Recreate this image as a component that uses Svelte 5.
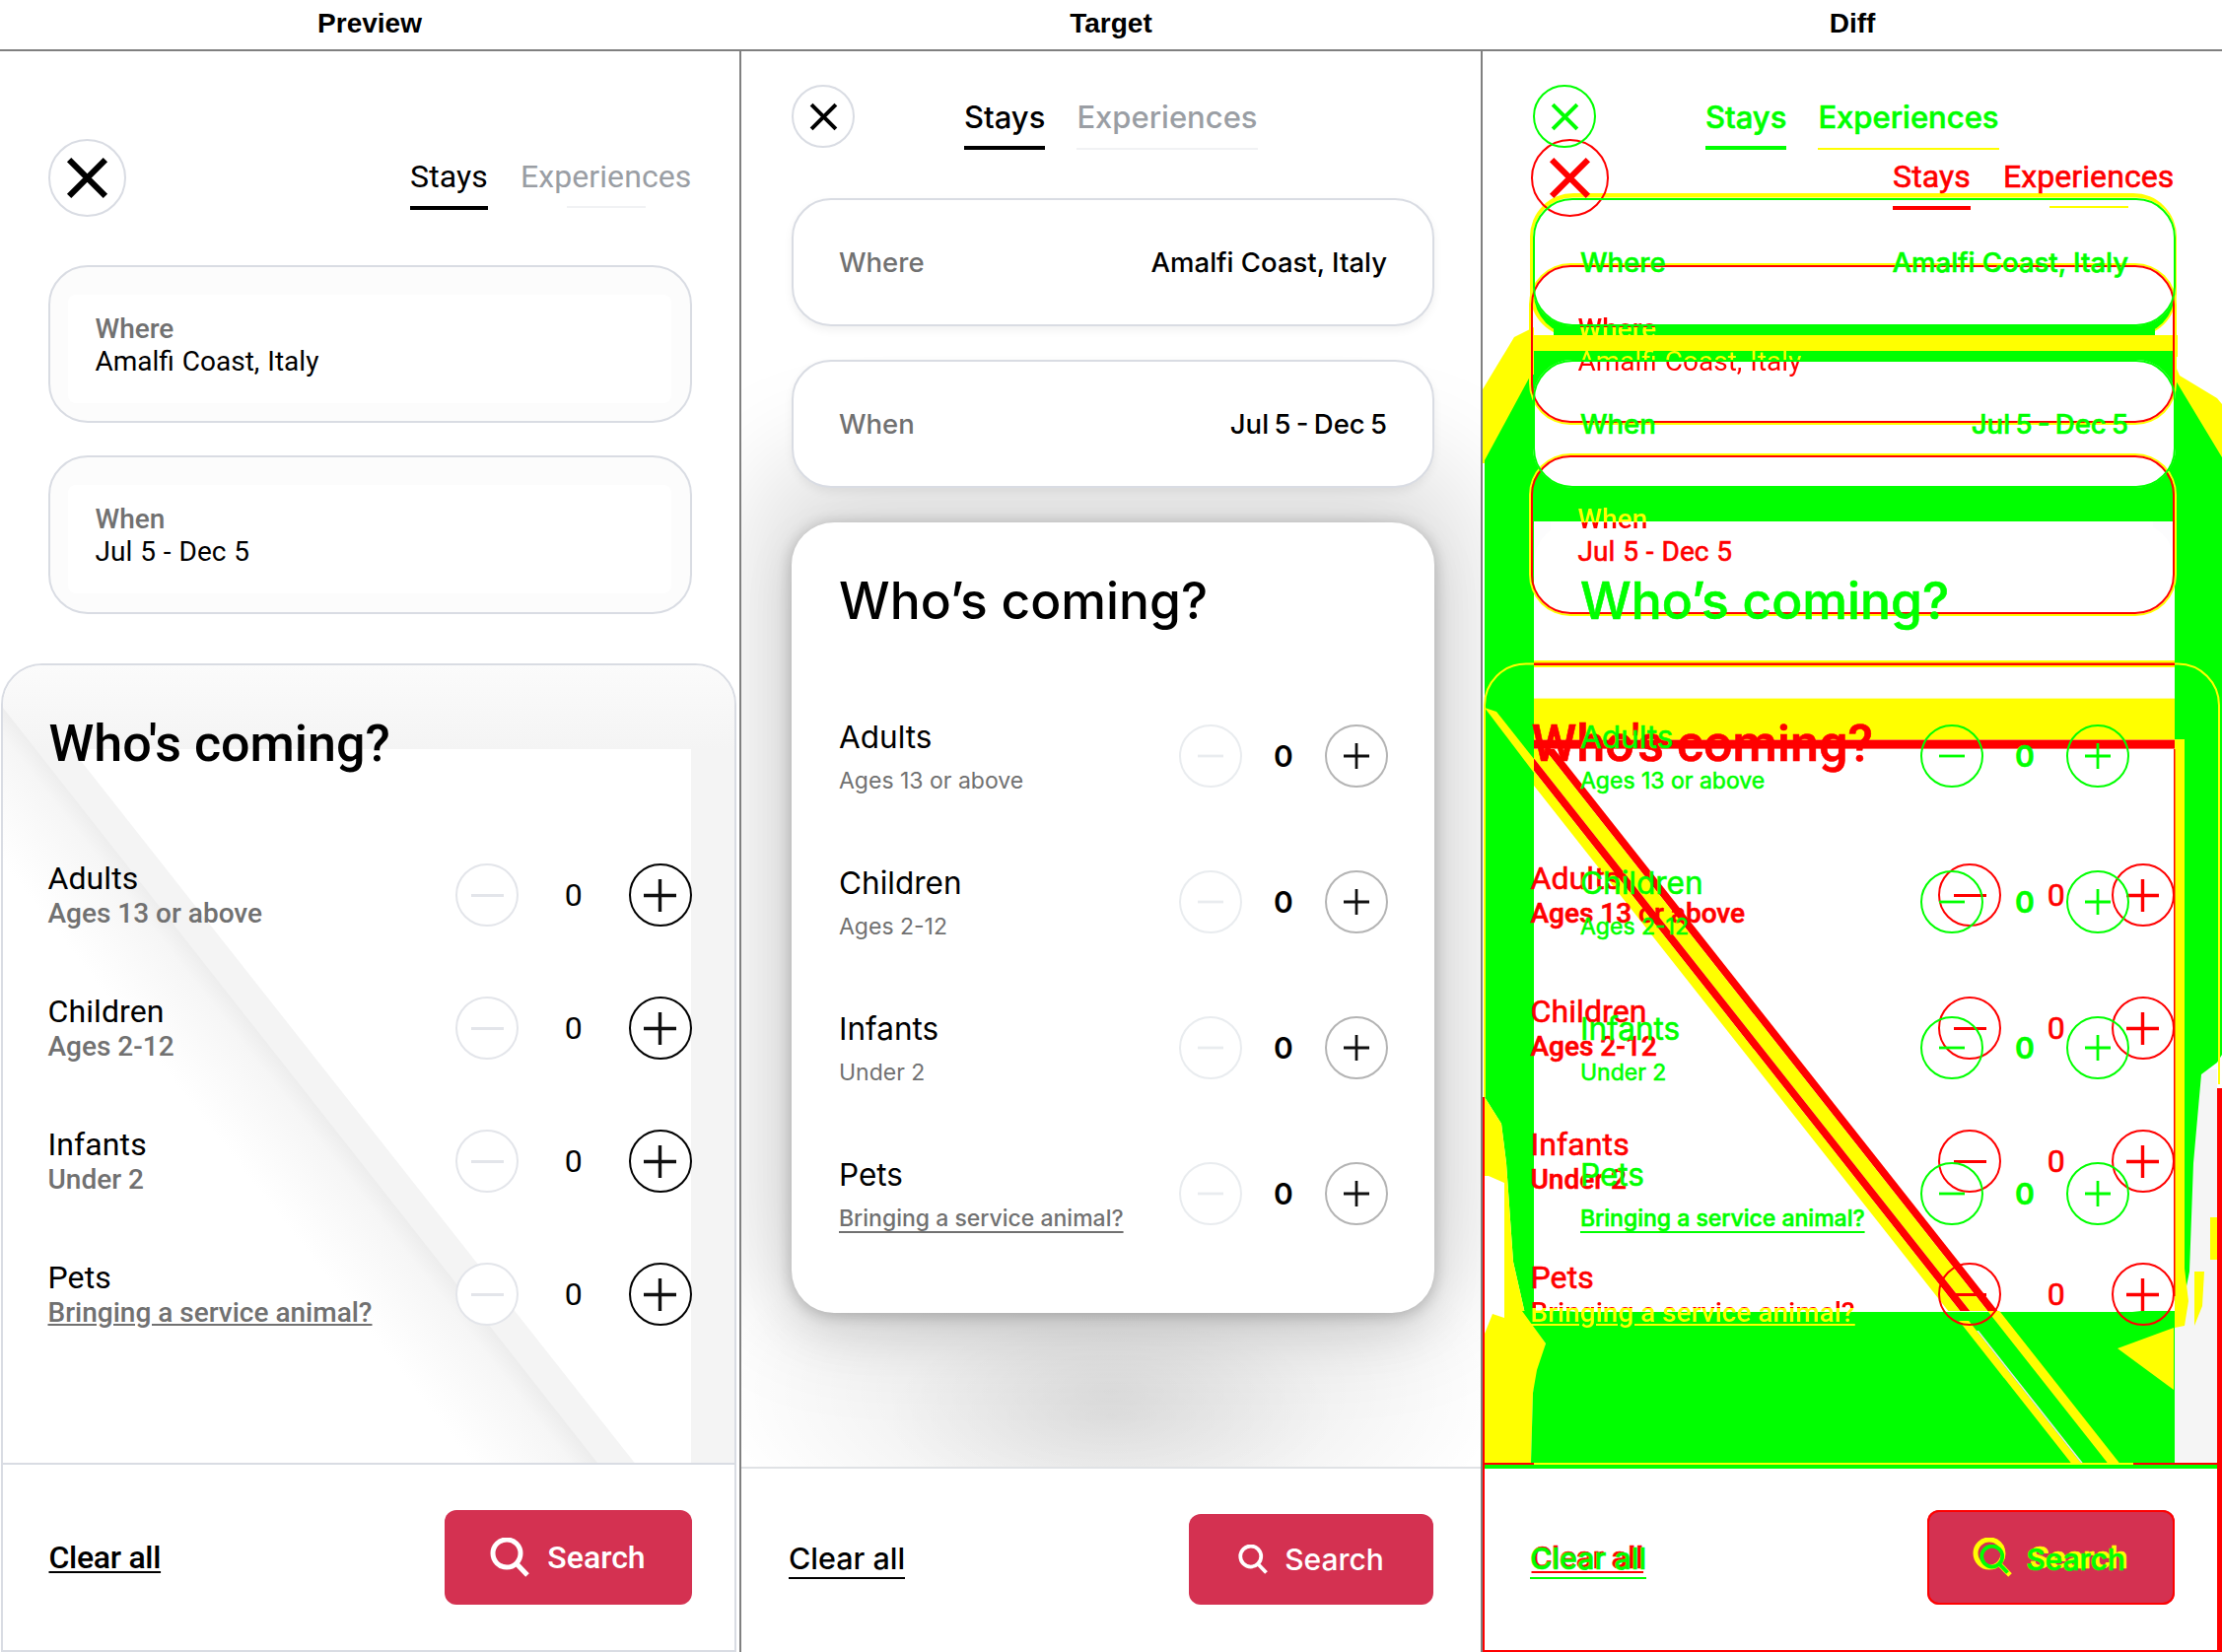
<script>
  const rows = [
    { name: 'Adults', sub: 'Ages 13 or above' },
    { name: 'Children', sub: 'Ages 2-12' },
    { name: 'Infants', sub: 'Under 2' },
    { name: 'Pets', sub: 'Bringing a service animal?', link: true }
  ];
  const k = 1.268;
  const X2 = (y) => 83 + (y - 773) / k;
  const stripe = (a, b, y0, y1) =>
    `${X2(y0) + a},${y0} ${X2(y0) + b},${y0} ${X2(y1) + b},${y1} ${X2(y1) + a},${y1}`;
</script>

{#snippet closeIcon()}
  <svg class="xicon" viewBox="0 0 24 24" aria-hidden="true"><path d="M3 3 21 21M21 3 3 21" /></svg>
{/snippet}
{#snippet plusIcon()}
  <svg class="pmicon" viewBox="0 0 32 32" aria-hidden="true"><path d="M0 16H32M16 0V32" /></svg>
{/snippet}
{#snippet minusIcon()}
  <svg class="pmicon" viewBox="0 0 32 32" aria-hidden="true"><path d="M0 16H32" /></svg>
{/snippet}
{#snippet searchIcon()}
  <svg class="sicon" viewBox="0 0 40 40" aria-hidden="true"><circle cx="17" cy="16" r="14" /><path d="M26.5 26 38 38" /></svg>
{/snippet}

{#snippet previewUI(deco)}
  <div class="p-ui">
    <div class="p-head">
      <button class="round close">{@render closeIcon()}</button>
      <div class="tabs">
        <div class="tab on"><span>Stays</span><i></i></div>
        <div class="tab"><span>Experiences</span><i></i></div>
      </div>
    </div>
    <div class="p-card">
      <div class="p-inner">
        <div class="lab hl-where">Where</div>
        <div class="val hl-amalfi">Amalfi Coast, Italy</div>
      </div>
    </div>
    <div class="p-card">
      <div class="p-inner">
        <div class="lab hl-when">When</div>
        <div class="val">Jul 5 - Dec 5</div>
      </div>
    </div>
    <div class="p-sheet">
      <div class="p-main">
        {#if deco}
          <svg class="deco" viewBox="3 675 744 809" aria-hidden="true">
            <defs>
              <linearGradient id="fade" gradientUnits="userSpaceOnUse" x1="300" y1="1095" x2="222" y2="1156">
                <stop offset="0" stop-color="#ededed" />
                <stop offset="0.2" stop-color="#f6f6f6" />
                <stop offset="1" stop-color="#ffffff" />
              </linearGradient>
            </defs>
            <polygon fill="#fff" points="72.7,760 701,760 701,1484 643.7,1484" />
            <polygon fill="url(#fade)" points="3,718 606,1484 3,1484" />
          </svg>
        {/if}
        <div class="p-content">
          <h2>Who's coming?</h2>
          <div class="p-rows">
            {#each rows as r}
              <div class="p-row">
                <div class="p-text">
                  <div class="name">{r.name}</div>
                  <div class="sub" class:link={r.link} class:hl-bring={r.link}>{r.sub}</div>
                </div>
                <div class="ctrl">
                  <button class="round minus">{@render minusIcon()}</button>
                  <span class="count">0</span>
                  <button class="round plus">{@render plusIcon()}</button>
                </div>
              </div>
            {/each}
          </div>
        </div>
      </div>
      <div class="p-foot">
        <span class="clear">Clear all</span>
        <button class="search">{@render searchIcon()}<span>Search</span></button>
      </div>
    </div>
  </div>
{/snippet}

{#snippet targetUI()}
  <div class="t-ui">
    <div class="t-head">
      <button class="round close">{@render closeIcon()}</button>
      <div class="tabs">
        <div class="tab on"><span>Stays</span><i></i></div>
        <div class="tab"><span>Experiences</span><i></i></div>
      </div>
    </div>
    <div class="t-card"><span class="lab">Where</span><span class="val">Amalfi Coast, Italy</span></div>
    <div class="t-card"><span class="lab">When</span><span class="val tight">Jul 5 - Dec 5</span></div>
    <div class="t-sheet">
      <h2>Who’s coming?</h2>
      <div class="t-rows">
        {#each rows as r}
          <div class="t-row">
            <div class="t-text">
              <div class="name">{r.name}</div>
              <div class="sub" class:link={r.link}>{r.sub}</div>
            </div>
            <div class="ctrl">
              <button class="round minus">{@render minusIcon()}</button>
              <span class="count">0</span>
              <button class="round plus">{@render plusIcon()}</button>
            </div>
          </div>
        {/each}
      </div>
    </div>
    <div class="t-gap"></div>
    <div class="t-foot">
      <span class="clear">Clear all</span>
      <button class="search">{@render searchIcon()}<span>Search</span></button>
    </div>
  </div>
{/snippet}

<div class="board">
  <section class="panel">
    <header>Preview</header>
    <div class="body">{@render previewUI(true)}</div>
  </section>
  <section class="panel">
    <header>Target</header>
    <div class="body">{@render targetUI()}</div>
  </section>
  <section class="panel last">
    <header>Diff</header>
    <div class="body diff">
      <svg class="diffmap" viewBox="0 52 750 1624" aria-hidden="true">
        <defs>
          <clipPath id="mid"><rect x="52" y="760" width="650" height="570" /></clipPath>
        </defs>
        <rect x="48.5" y="268.6" width="653" height="160" rx="40" fill="#fcfcfd" />
        <rect x="69" y="298.5" width="611" height="110" rx="8" fill="#fff" />
        <rect x="48.5" y="462.4" width="653" height="161" rx="40" fill="#fcfcfd" />
        <rect x="69" y="496" width="611" height="110" rx="8" fill="#fff" />
        <rect x="52" y="677" width="650" height="32" fill="#fbfbfb" />
        <rect x="702" y="1085" width="43" height="399" fill="#f5f5f5" />

        <polygon fill="#ff0" points="0,395 32,342 52,332 52,470 0,470" />
        <polygon fill="#ff0" points="698,360 707,381 745,404 750,410 750,470 698,470" />
        <rect x="48" y="196" width="656" height="146" rx="44" fill="#ff0" />
        <rect x="50" y="340" width="655" height="22" fill="#ff0" />

        <polygon fill="#0f0" points="2,467 49,380 52,380 52,1330 43,1333 31,1280 24,1180 19,1140 2,1113" />
        <polygon fill="#0f0" points="750,464 703,386 702,386 702,1315 712,1315 717,1290 721,1180 729,1090 745,1078 750,1070" />
        <rect x="52" y="356" width="650" height="173" fill="#0f0" />
        <rect x="52" y="240" width="650" height="100" rx="42" fill="#0f0" />
        <rect x="72" y="331" width="610" height="9" fill="#0f0" />
        <rect x="72" y="356" width="610" height="9" fill="#0f0" />
        <rect x="51" y="200.6" width="652" height="130" rx="40" fill="#fff" />
        <rect x="72" y="340" width="610" height="16" fill="#ff0" />
        <rect x="51" y="365" width="652" height="129.5" rx="40" fill="#fff" />

        <polygon fill="#ff0" points="2,1113 19,1140 24,1180 31,1280 43,1333 64,1363 51,1413 49,1484 2,1484 2,1353 10,1333 22,1337 22,1200 6,1193 2,1193" />
        <polygon fill="#0f0" points="40,1330 702,1330 702,1484 49,1484 51,1413 55,1390 64,1363" />
        <rect x="0" y="1486" width="750" height="4" fill="#0f0" />
        <rect x="0" y="1484" width="750" height="2" fill="#ff0" />
        <rect x="0" y="1484" width="52" height="2" fill="#f00" />
        <rect x="660" y="1484" width="85" height="2" fill="#f00" />
        <polygon fill="#ff0" points="644,1368 701,1347 701,1410" />
        <polygon fill="#ff0" points="702,1287 712,1287 716,1320 712,1345 702,1347" />
        <polygon fill="#ff0" points="722,1290 732,1290 730,1325 722,1345" />
        <rect x="738" y="1235" width="7" height="43" fill="#ff0" />

        <rect x="52" y="529" width="650" height="802" rx="43" fill="#fff" />
        <rect x="702" y="750" width="10" height="550" fill="#ff0" />
        <rect x="701" y="760" width="1.5" height="555" fill="#f00" />

        <rect x="52" y="708.6" width="650" height="42" fill="#ff0" />
        <rect x="52" y="750.6" width="650" height="9" fill="#f00" />

        <g clip-path="url(#mid)">
          <polygon fill="#f00" points={stripe(-10, 0, 700, 1340)} />
          <polygon fill="#ff0" points={stripe(-28, -10, 700, 1340)} />
          <polygon fill="#f00" points={stripe(-38, -28, 700, 1340)} />
          <polygon fill="#ff0" points={stripe(-50, -38, 700, 1340)} />
        </g>
        <polygon fill="#ff0" points="2,718 14,722 52,770 52,784" />
        <polygon fill="#ff0" points={stripe(-10, 2, 1330, 1484)} />
        <polygon fill="#ff0" points={stripe(-47, -37, 1340, 1484)} />
        <polygon fill="#e8e8e8" points={stripe(-37, -35, 1350, 1484)} />

        <path d="M2 1113V716A42 42 0 0 1 44 673.5H705A42 42 0 0 1 747 716V1100" fill="none" stroke="#ff0" stroke-width="2" />
        <rect x="52" y="670" width="650" height="7" fill="#ff0" />
        <rect x="52" y="672.5" width="650" height="2.5" fill="#f00" />
        <rect x="0" y="1113" width="2" height="563" fill="#f00" />
        <rect x="745" y="1104" width="5" height="572" fill="#f00" />
        <rect x="0" y="1674" width="750" height="2" fill="#f00" />
      </svg>
      <div class="layer red">{@render previewUI(false)}</div>
      <div class="layer green">{@render targetUI()}</div>
    </div>
  </section>
</div>

<style>
  :global(body) { margin: 0; background: #fff; }
  .board {
    display: grid;
    grid-template-columns: 752px 752px 750px;
    width: 2254px;
    height: 1676px;
    overflow: hidden;
    font-family: "Roboto", sans-serif;
    color: #000;
  }
  .panel { display: flex; flex-direction: column; min-width: 0; }
  header {
    height: 50px;
    border-bottom: 2px solid #808080;
    text-align: center;
    font: bold 28px/47px "Liberation Sans", sans-serif;
    padding-right: 2px;
  }
  .last header { padding-right: 0; }
  .body {
    position: relative;
    height: 1624px;
    border-right: 2px solid #808080;
    overflow: hidden;
  }
  .last .body { border-right: 0; }

  /* shared colours, overridden by the diff layers */
  .body {
    --ink: #000;
    --muted: #717171;
    --soft: #9a9ea4;
    --line: #d9dce3;
    --tabline: #f1f2f4;
    --minus: #e3e5ea;
    --minusicon: #e3e5ea;
    --plus: #000;
    --plusicon: #111;
    --white: #fff;
    --soft-bg: #fcfcfc;
    --btn: #d43151;
    --btntext: #fff;
    --cardring: 0 0 0 0 transparent;
  }

  button { font: inherit; padding: 0; margin: 0; background: none; border: 0; color: inherit; }
  .round {
    display: flex;
    align-items: center;
    justify-content: center;
    box-sizing: border-box;
    border-radius: 50%;
    border: 2px solid var(--line);
    background: var(--white);
    flex: none;
  }
  .xicon { fill: none; stroke: var(--ink); }
  .pmicon { fill: none; }
  .sicon { fill: none; stroke: var(--btntext); }
  .minus { border-color: var(--minus); }
  .minus .pmicon { stroke: var(--minusicon); }
  .plus { border-color: var(--plus); }
  .plus .pmicon { stroke: var(--plusicon); }

  .tabs { display: flex; }
  .tab { display: flex; flex-direction: column; align-items: center; color: var(--soft); }
  .tab.on { color: var(--ink); }
  .tab i { display: block; }
  .tab.on i { background: var(--ink); }
  .tab:not(.on) i { background: var(--tabline); }
  .clear { color: var(--ink); }
  .search {
    display: flex;
    align-items: center;
    justify-content: center;
    background: var(--btn);
    color: var(--btntext);
    box-sizing: border-box;
    box-shadow: var(--btnring, none);
  }
  .name { color: var(--ink); }
  .sub { color: var(--muted); }
  .count { text-align: center; color: var(--ink); }
  .lab { color: var(--muted); }
  .val { color: var(--ink); }
  h2 { margin: 0; color: var(--ink); }
  .link { text-decoration: underline; }

  /* PREVIEW */
  .p-ui {
    display: flex;
    flex-direction: column;
    height: 1624px;
    width: 750px;
    font-family: "Roboto", sans-serif;
  }
  .p-head {
    display: flex;
    justify-content: space-between;
    align-items: flex-start;
    padding: 88.5px 48.5px 0;
    height: 79px;
    margin-bottom: 49px;
  }
  .p-ui .close { width: 79px; height: 79px; }
  .p-ui .xicon { width: 49px; height: 49px; stroke-width: 3; }
  .p-ui .tabs { gap: 33px; margin-top: 20px; }
  .p-ui .tab { font-size: 32px; line-height: 37px; letter-spacing: .1px; }
  .p-ui .tab i { height: 4px; margin-top: 11.5px; width: 100%; }
  .p-ui .tab:not(.on) i { width: 80px; height: 2px; }
  .p-card {
    box-sizing: border-box;
    margin: 0 48.5px 33.4px;
    height: 160.5px;
    padding: 28px 18.5px;
    border: 2px solid var(--line);
    border-radius: 40px;
    background: var(--soft-bg);
    box-shadow: var(--cardring);
  }
  .p-inner {
    height: 110px;
    padding: 18px 0 0 27.5px;
    box-sizing: border-box;
    background: var(--white);
    border-radius: 8px;
    font-size: 28px;
    line-height: 33px;
  }
  .p-inner .lab { font-weight: 500; }
  .p-inner .val { word-spacing: 1px; }
  .p-sheet {
    flex: 1;
    display: flex;
    flex-direction: column;
    margin: 16.4px 3px 0 1px;
    border: 2px solid var(--sheetline, var(--line));
    border-radius: 42px 42px 0 0;
    min-height: 0;
  }
  .p-main {
    flex: 1;
    position: relative;
    overflow: hidden;
    border-radius: 40px 40px 0 0;
    background: var(--sheetbg, linear-gradient(#fbfbfb, #f4f4f4 85px));
  }
  .deco { position: absolute; left: 0; top: 0; width: 744px; height: 809px; }
  .p-content { position: relative; padding: 50.4px 43.5px 0 45.5px; }
  .p-ui h2 { font-size: 52px; line-height: 60px; font-weight: 500; padding-left: 1px; }
  .p-rows { display: flex; flex-direction: column; gap: 63px; margin-top: 87px; }
  .p-row { display: flex; justify-content: space-between; align-items: center; height: 72px; }
  .p-ui .name { font-size: 32px; line-height: 37px; letter-spacing: .1px; }
  .p-ui .sub { font-size: 28px; line-height: 33px; font-weight: 500; }
  .ctrl { display: flex; align-items: center; }
  .p-ui .round.minus, .p-ui .round.plus { width: 64px; height: 64px; }
  .p-ui .pmicon { width: 33px; height: 33px; stroke-width: 3.3; }
  .p-ui .minus .pmicon { stroke-width: 3; }
  .p-ui .count { width: 111.5px; font-size: 32px; }
  .p-foot {
    height: 188px;
    display: flex;
    justify-content: space-between;
    align-items: center;
    border-top: 2px solid var(--footline, var(--line));
    padding: 0 43.5px 0 46.5px;
    background: var(--white);
    flex: none;
  }
  .p-ui .clear { font-size: 32px; font-weight: 500; letter-spacing: -.3px; text-decoration: underline; text-decoration-thickness: 2px; text-underline-offset: 3px; }
  .p-ui .search { width: 251px; height: 96px; border-radius: 12px; font-size: 32px; font-weight: 500; gap: 18px; }
  .p-ui .sicon { width: 40px; height: 40px; stroke-width: 5; }

  /* TARGET */
  .t-ui {
    display: flex;
    flex-direction: column;
    height: 1624px;
    width: 750px;
    font-family: "Inter", sans-serif;
    background: var(--stage,
      radial-gradient(ellipse 230px 100px at 375px 1385px, rgba(0,0,0,.05), transparent),
      radial-gradient(ellipse 400px 190px at 375px 1360px, rgba(0,0,0,.1), transparent));
  }
  .t-head { display: flex; align-items: flex-start; padding: 34px 0 0 51px; height: 64px; margin-bottom: 50.6px; }
  .t-ui .close { width: 64px; height: 64px; }
  .t-ui .xicon { width: 33px; height: 33px; stroke-width: 2.9; }
  .t-ui .tabs { gap: 32px; margin-left: 111px; margin-top: 15px; }
  .t-ui .tab { font-size: 31px; line-height: 36px; font-weight: 500; }
  .t-ui .tab i { height: 4px; width: 100%; margin-top: 11px; }
  .t-ui .tab:not(.on) i { height: 2px; margin-top: 13px; }
  .t-card {
    position: relative;
    z-index: 1;
    box-sizing: border-box;
    display: flex;
    justify-content: space-between;
    align-items: center;
    height: 130px;
    margin: 0 47px 34.5px 51px;
    padding: 0 46px;
    border: 2px solid var(--line);
    border-radius: 40px;
    background: var(--white);
    box-shadow: var(--cardshadow, 0 4px 10px rgba(0,0,0,.06));
    font-size: 27.5px;
    font-weight: 500;
  }
  .tight { word-spacing: -2px; }
  .t-sheet {
    box-sizing: border-box;
    height: 802px;
    margin: 0 47px 0 51px;
    padding: 48px 47px 0 48px;
    border-radius: 43px;
    background: var(--white);
    box-shadow: var(--sheetshadow, 0 2px 14px 2px rgba(0,0,0,.18), 0 -30px 110px 40px rgba(0,0,0,.13), 0 20px 50px rgba(0,0,0,.1));
  }
  .t-ui h2 { font-size: 51.5px; line-height: 62px; font-weight: 500; }
  .t-rows { display: flex; flex-direction: column; gap: 84px; margin-top: 95px; }
  .t-row { display: flex; justify-content: space-between; align-items: center; height: 64px; }
  .t-text { margin-top: 4.5px; }
  .t-ui .name { font-size: 31.5px; line-height: 38px; }
  .t-ui .sub { font-size: 23px; line-height: 34px; margin-top: 8.5px; }
  .t-ui .sub.link { font-weight: 500; font-size: 23px; text-underline-offset: 5px; }
  .t-ui .round.minus, .t-ui .round.plus { width: 64px; height: 64px; }
  .t-ui .minus { border-color: var(--tminus, #e9ecef); }
  .t-ui .plus { border-color: var(--tplus, #b4b4b4); }
  .t-ui .pmicon { width: 26px; height: 26px; stroke-width: 3.4; }
  .t-ui .minus .pmicon { stroke: var(--tminus, #e9ecef); }
  .t-ui .count { width: 84px; font-size: 30px; font-weight: 600; }
  .t-gap { flex: 1; }
  .t-foot {
    position: relative;
    height: 188px;
    flex: none;
    box-sizing: border-box;
    display: flex;
    justify-content: space-between;
    align-items: center;
    border-top: 2px solid var(--footline, #e0e2e5);
    padding: 0 48px 2px 48px;
    background: var(--white);
  }
  .t-ui .clear { font-size: 30.5px; font-weight: 500; border-bottom: 2px solid var(--ink); line-height: 38px; }
  .t-ui .search { width: 248px; height: 92px; border-radius: 12px; font-size: 30px; font-weight: 500; gap: 17px; }
  .t-ui .sicon { width: 30px; height: 30px; stroke-width: 5; }

  /* DIFF */
  .diffmap { position: absolute; left: 0; top: 0; width: 750px; height: 1624px; }
  .layer { position: absolute; left: 0; top: 0; width: 750px; height: 1624px; -webkit-text-stroke: .6px; }
  .red {
    --ink: #f00; --muted: #f00; --soft: #f00; --line: #f00; --tabline: #ff0;
    --minus: #f00; --minusicon: #f00; --plus: #f00; --plusicon: #f00;
    --white: transparent; --soft-bg: transparent;
    --btn: #d43151; --btntext: #ff0; --btnring: inset 0 0 0 2px #f00;
    --cardring: 0 0 0 2px #ff0;
    --sheetline: transparent; --sheetbg: transparent; --footline: transparent;
  }
  .green {
    --ink: #0f0; --muted: #0f0; --soft: #0f0; --line: #0f0; --tabline: #ff0;
    --minus: #0f0; --minusicon: #0f0; --plus: #0f0; --plusicon: #0f0;
    --tminus: #0f0; --tplus: #0f0;
    --white: transparent; --btn: transparent; --btntext: #0f0;
    --stage: transparent; --cardshadow: none; --sheetshadow: none; --footline: transparent;
  }
  .red .hl-where, .red .hl-amalfi, .red .hl-when, .red .hl-bring {
    -webkit-background-clip: text;
    background-clip: text;
    color: transparent;
    -webkit-text-stroke: 0;
  }
  .red .hl-where { background-image: linear-gradient(#f00 45%, #ff0 45%); }
  .red .hl-amalfi { background-image: linear-gradient(#ff0 48%, #f00 48%); }
  .red .hl-when { background-image: linear-gradient(#ff0 60%, #f00 60%); }
  .red .hl-bring { background-image: linear-gradient(#f00 36%, #ff0 36%); text-decoration-color: #ff0; }
</style>
